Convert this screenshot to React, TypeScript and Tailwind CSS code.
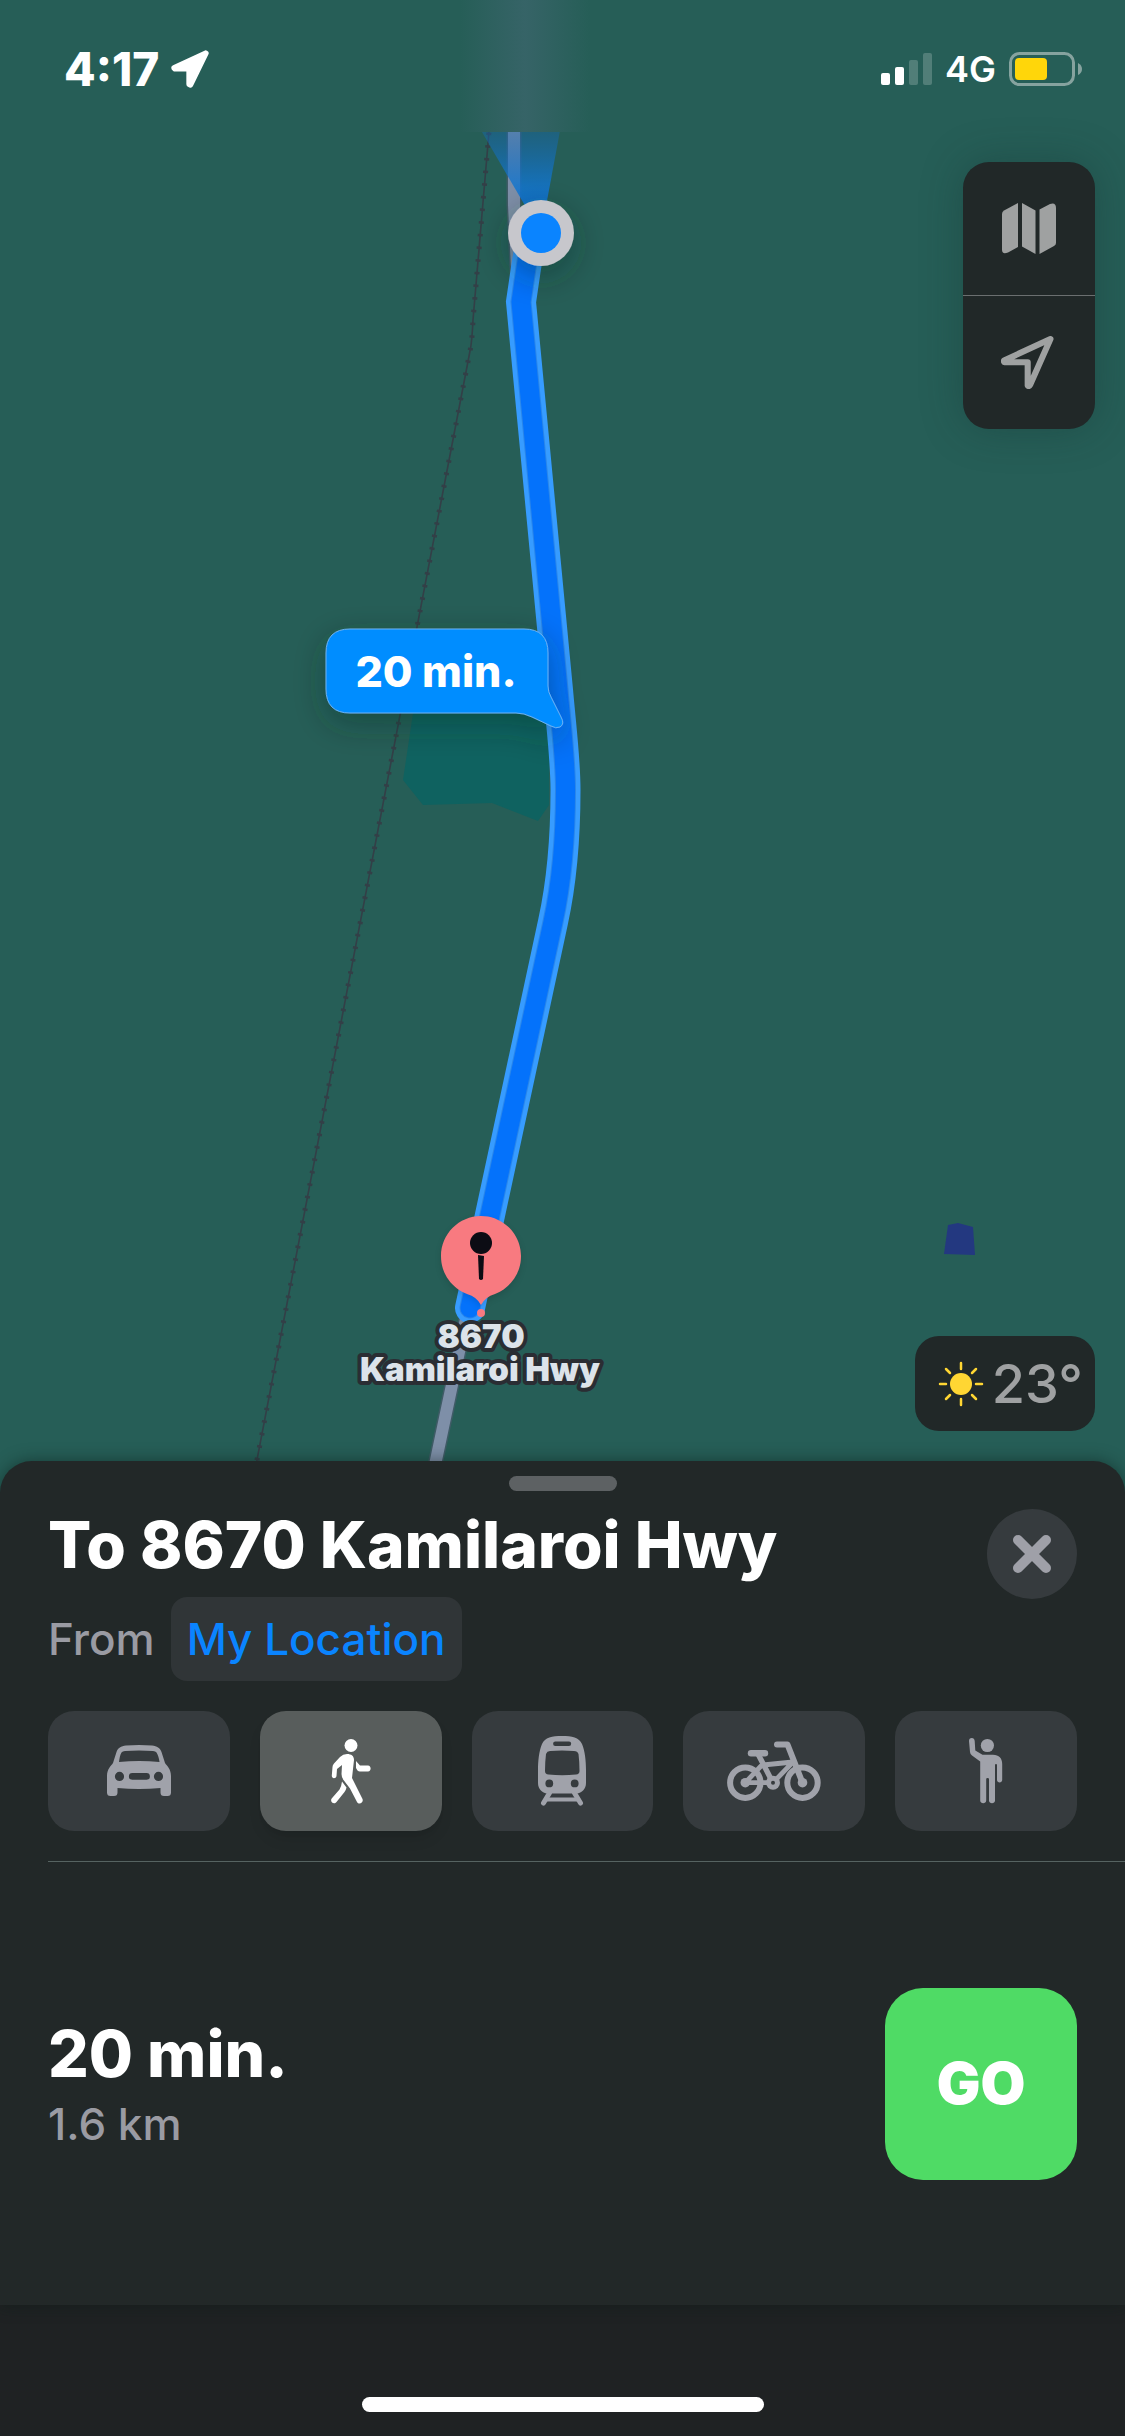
import type { ReactNode } from "react";

type Mode = {
  id: string;
  label: string;
  icon: ReactNode;
};

function CarIcon() {
  return (
    <svg width="64" height="52" viewBox="0 0 64 52" fill="currentColor" aria-hidden="true">
      <path
        fillRule="evenodd"
        d="M19 .5Q32-.5 45 .5C50 1 53 3 54.5 7L58 18C60 21 64 24 64 31V47.500Q64 51 60.500 51H57Q53.500 51 53.500 47.500V43Q32 45 10.500 43V47.500Q10.500 51 7 51H3.500Q0 51 0 47.500V31C0 24 4 21 6 18L9.500 7C11 3 14 1 19 .5ZM12 17Q32 15 52.500 17C52 13 51 10 49.500 7.500Q48.500 6 46 6Q32 5 18 6Q15.500 6 14.500 7.500C13 10 12.500 13 12 17ZM12.500 26.800A4.600 4.600 0 1 0 12.500 36A4.600 4.600 0 1 0 12.500 26.800ZM51.500 26.800A4.600 4.600 0 1 0 51.500 36A4.600 4.600 0 1 0 51.500 26.800ZM25.300 28A3.400 3.400 0 0 0 25.300 34.800H39.500A3.400 3.400 0 0 0 39.500 28Z"
      />
    </svg>
  );
}

function WalkIcon() {
  return (
    <svg width="40" height="65" viewBox="0 0 40 65" fill="currentColor" aria-hidden="true">
      <circle cx="20" cy="6.500" r="6.500" />
      <path d="M16 15C20.500 15 23 17 23 21L21 39L31.500 60C33 63.500 28 66.500 26 63L19 49.500L12.500 41Q10.500 38.500 10.500 35L11 26L6 30L5.500 37C5 40 .5 40 .8 36.500L1.500 28Q1.500 26 3 24.500L9 18Q12 15 16 15Z" />
      <path d="M25 22L29 26.500H37C40.500 26.500 40.500 32.500 37 32.500H29Q27.500 32.500 26.500 31.500L25 29Z" />
      <path d="M11 42.500L15.500 48.500Q15 51 13.500 53L5.500 63C3 66.500-1.500 62.500 .7 59.500L8.500 50.500Q10.500 47 11 42.500Z" />
    </svg>
  );
}

function TrainIcon() {
  return (
    <svg width="48" height="70" viewBox="0 0 48 70" fill="currentColor" aria-hidden="true">
      <path
        fillRule="evenodd"
        d="M24 0C34 0 41 1.500 44 8C47 15 48 25 48 34V47C48 53 44 57 38.500 57.500H9.500C4 57 0 53 0 47V34C0 25 1 15 4 8C7 1.500 14 0 24 0ZM17.300 5.500A2.200 2.200 0 0 0 17.300 9.900H31A2.200 2.200 0 0 0 31 5.500ZM12 15Q24 14 36 15Q39.500 15.200 40.500 18Q41.500 26 41.500 35Q41.500 38.300 38 38.500Q24 40 10.500 38.500Q7 38.300 7 35Q7 26 8 18Q9 15.200 12 15ZM11.300 43.500A3.900 3.900 0 1 0 11.300 51.300A3.900 3.900 0 1 0 11.300 43.500ZM36.700 43.500A3.900 3.900 0 1 0 36.700 51.300A3.900 3.900 0 1 0 36.700 43.500Z"
      />
      <path d="M11.500 57L5.500 67M36.500 57L42.500 67" stroke="currentColor" strokeWidth="5" strokeLinecap="round" />
      <path d="M9 63.500H39" stroke="currentColor" strokeWidth="4" />
    </svg>
  );
}

function BikeIcon() {
  return (
    <svg
      width="94"
      height="60"
      viewBox="0 0 94 60"
      fill="none"
      stroke="currentColor"
      strokeWidth="5.400"
      strokeLinecap="round"
      strokeLinejoin="round"
      aria-hidden="true"
    >
      <circle cx="18.300" cy="41.700" r="15.200" strokeWidth="6" />
      <circle cx="75.500" cy="41.700" r="15.200" strokeWidth="6" />
      <circle cx="18.300" cy="41.700" r="4.800" fill="currentColor" stroke="none" />
      <circle cx="75.500" cy="41.700" r="4.800" fill="currentColor" stroke="none" />
      <path d="M24 12.200H38" strokeWidth="6.400" />
      <path d="M31 13L45.500 41" />
      <path d="M50 3.500H60.500L75.500 41.700" strokeWidth="6" />
      <path d="M36 24L66 21L46 41.700M18.300 41.700H46M18.300 41.700L34 25" strokeWidth="4.800" />
      <circle cx="46" cy="41.700" r="7" fill="currentColor" stroke="none" />
      <circle cx="46" cy="41.700" r="2" fill="#363b3e" stroke="none" />
    </svg>
  );
}

function RideshareIcon() {
  return (
    <svg width="34" height="66" viewBox="0 0 34 66" fill="currentColor" aria-hidden="true">
      <circle cx="18.400" cy="7.500" r="6.600" />
      <path d="M2.800 0C4.500 0 5.500 1 5.700 3L6.300 12.500L13.500 16.800H24C30 16.800 33.200 20.500 33.200 26V42C33.200 45.300 28 45.300 28 42V27Q28 26 27 26T26 27V62.500C26 66 20 66 20 62.500V41Q20 40 18.600 40T17.200 41V62.500C17.200 66 11.200 66 11.200 62.500V23.500L3 17.500Q1.200 16 1 14L0 3C0 1 1 0 2.800 0Z" />
    </svg>
  );
}

function MapIcon() {
  return (
    <svg width="54" height="51" viewBox="0 0 54 51" fill="currentColor" aria-hidden="true">
      <path d="M16 0V44L6 49.500Q0 52 0 46.500V11Q0 8.700 2 7.500Z" />
      <path d="M20 0L33.500 7.500V51L20 43.500Z" />
      <path d="M37.500 6.500L48 1Q54-1 54 5V40Q54 42 52 43L37.500 51Z" />
    </svg>
  );
}

function LocationIcon({ size, filled }: { size: number; filled?: boolean }) {
  return (
    <svg
      width={size}
      height={size}
      viewBox="0 0 52 52"
      fill={filled ? "currentColor" : "none"}
      stroke="currentColor"
      strokeWidth={filled ? 8 : 6}
      strokeLinejoin="round"
      aria-hidden="true"
    >
      {filled ? (
        <path d="M47.500 4.500L4.500 24.500L5.500 25.500H25V47L26.500 47.500Z" />
      ) : (
        <path d="M48.500 3L3 24Q2.500 25.500 4 25.800H26.200V48.500Q27.500 50 28.500 48Z" />
      )}
    </svg>
  );
}

function SunIcon() {
  return (
    <svg width="46" height="46" viewBox="0 0 46 46" aria-hidden="true">
      <circle cx="23" cy="23" r="11" fill="#ffd633" />
      <path
        d="M23 2V8M23 38V44M2 23H8M38 23H44M8 8L12 12M34 34L38 38M8 38L12 34M34 12L38 8"
        stroke="#ffd633"
        strokeWidth="2.500"
        strokeLinecap="round"
      />
    </svg>
  );
}

const modes: Mode[] = [
  { id: "drive", label: "Drive", icon: <CarIcon /> },
  { id: "walk", label: "Walk", icon: <WalkIcon /> },
  { id: "transit", label: "Transit", icon: <TrainIcon /> },
  { id: "cycle", label: "Cycle", icon: <BikeIcon /> },
  { id: "rideshare", label: "Rideshare", icon: <RideshareIcon /> },
];

const ROUTE =
  "M533 225L526 268L521 302L558 690C562 735 565.500 760 565.500 790C565.500 850 560 890 553 922L470 1308";
const RAIL = "M490 120L473 320Q472 342 470 351L256 1465";

function RouteMap() {
  return (
    <svg
      className="absolute inset-0 size-full"
      viewBox="0 0 1125 1461"
      preserveAspectRatio="xMidYMin slice"
      role="img"
      aria-label="Walking route to 8670 Kamilaroi Hwy"
    >
      <defs>
        <linearGradient id="cone" x1="0" y1="1" x2="0" y2="0">
          <stop offset="0" stopColor="#0a70e0" />
          <stop offset=".4" stopColor="#1276d0" stopOpacity=".85" />
          <stop offset="1" stopColor="#1565b0" stopOpacity=".3" />
        </linearGradient>
        <linearGradient id="haze" x1="0" x2="1" y1="0" y2="0">
          <stop offset="0" stopColor="#3a656b" stopOpacity="0" />
          <stop offset=".5" stopColor="#3a656b" stopOpacity=".8" />
          <stop offset="1" stopColor="#3a656b" stopOpacity="0" />
        </linearGradient>
        <filter id="shadow" x="-50%" y="-50%" width="200%" height="250%">
          <feDropShadow dx="0" dy="10" stdDeviation="16" floodColor="#10302c" floodOpacity=".4" />
        </filter>
      </defs>

      <rect width="1125" height="1461" fill="#265e57" />
      <path d="M415 700L403 780L423 805L492 803L538 821L549 805V700Z" fill="#0f6260" />
      <path d="M948 1225L958 1223L973 1227L975 1255L944 1254Z" fill="#233880" />

      {/* railway */}
      <path d={RAIL} fill="none" stroke="#333f47" strokeWidth="1.600" />
      <path d={RAIL} fill="none" stroke="#333f47" strokeWidth="5" strokeDasharray="2.500 10.200" />

      {/* highway */}
      <g fill="none" strokeLinejoin="round">
        <path d="M514 120V205L518 290M470 1300L435 1465" stroke="#3f5b66" strokeWidth="15" />
        <path d="M514 120V205L518 290M470 1300L435 1465" stroke="#7e8fa8" strokeWidth="12" />
      </g>
      <path d="M541 233L475 120H562Z" fill="url(#cone)" />

      {/* route */}
      <g fill="none" strokeLinecap="round">
        <path d={ROUTE} stroke="#379cff" strokeWidth="30" />
        <path d={ROUTE} stroke="#2a86ea" strokeWidth="21" />
        <path d={ROUTE} stroke="#0472fb" strokeWidth="19" />
      </g>

      <g filter="url(#shadow)">
        <circle cx="541" cy="233" r="33" fill="#c7c7cc" />
      </g>
      <circle cx="541" cy="233" r="20" fill="#0a84ff" />

      {/* status bar backdrop */}
      <rect width="1125" height="132" fill="#265e57" />
      <rect x="460" width="130" height="132" fill="url(#haze)" />

      {/* duration callout */}
      <path
        d="M350 629H524Q548 629 548 653V686Q548 692 551 697L561 717Q565 724 560 727Q556 729 551 726L532 717Q524 713 516 713H350Q326 713 326 689V653Q326 629 350 629Z"
        fill="#058dff"
        stroke="#6cb2f2"
        strokeWidth="1"
        filter="url(#shadow)"
      />
      <text x="436" y="687" textAnchor="middle" fill="#fff" fontSize="43" fontWeight="800">
        20 min.
      </text>

      {/* destination pin */}
      <path
        d="M481 1216C503 1216 521 1234 521 1256C521 1274 510 1288 495 1294Q485 1297 481 1305Q477 1297 467 1294C452 1288 441 1274 441 1256C441 1234 459 1216 481 1216Z"
        fill="#f87a80"
        className="drop-shadow-md"
      />
      <circle cx="481" cy="1243" r="11" fill="#0c0c14" />
      <path d="M478 1255L484 1256L483 1279Q481 1281 479 1279Z" fill="#0c0c14" />
      <circle cx="481" cy="1313" r="4" fill="#f87a80" />
      <text
        textAnchor="middle"
        fill="#dce3ea"
        stroke="#2a2d33"
        strokeWidth="8"
        strokeLinejoin="round"
        paintOrder="stroke"
        fontSize="33"
        fontWeight="900"
      >
        <tspan x="481" y="1348">8670</tspan>
        <tspan x="480" y="1381">Kamilaroi Hwy</tspan>
      </text>
    </svg>
  );
}

function StatusBar() {
  return (
    <header className="flex h-[132px] items-start justify-between pt-12 pr-[43px] pl-16 text-white">
      <div className="flex h-[42px] items-center gap-3">
        <span className="text-[46px] leading-none font-extrabold">4:17</span>
        <LocationIcon size={38} filled />
      </div>
      <div className="flex h-[42px] items-center gap-[13px]">
        <div className="flex items-end gap-[5px]">
          <span className="h-3 w-[9px] rounded-xs bg-white" />
          <span className="h-[18px] w-[9px] rounded-xs bg-white" />
          <span className="h-[25px] w-[9px] rounded-xs bg-white/20" />
          <span className="h-8 w-[9px] rounded-xs bg-white/20" />
        </div>
        <span className="text-[36px] leading-none font-semibold">4G</span>
        <svg width="73" height="34" viewBox="0 0 73 34" aria-label="Battery">
          <rect x="1.500" y="1.500" width="63" height="31" rx="9" fill="none" stroke="#86a39f" strokeWidth="3" />
          <rect x="6" y="6" width="32" height="22" rx="4" fill="#ffd60a" />
          <path d="M69 11Q73 13 73 17T69 23Z" fill="#86a39f" />
        </svg>
      </div>
    </header>
  );
}

export default function App() {
  const active = "walk";

  return (
    <div className="flex min-h-screen flex-col bg-[#265e57] font-['Inter','Liberation_Sans',sans-serif]">
      <section className="relative flex flex-1 flex-col">
        <RouteMap />
        <div className="relative flex flex-1 flex-col">
          <StatusBar />
          <div className="flex flex-1 flex-col items-end justify-between px-[30px] py-[30px]">
            <div className="flex w-[132px] flex-col overflow-hidden rounded-[26px] bg-[#212828] text-[#9fa1a1] shadow-[0_0_40px_rgba(20,50,45,0.35)]">
              <button aria-label="Map type" className="flex h-[133px] items-center justify-center">
                <MapIcon />
              </button>
              <button
                aria-label="Track my location"
                className="flex h-[134px] items-center justify-center border-t border-[#6b6f70] pr-1"
              >
                <LocationIcon size={53} />
              </button>
            </div>
            <div className="flex h-[95px] w-[180px] items-center justify-end gap-2 rounded-3xl bg-[#212828] pr-3 text-[#9fa1a2]">
              <SunIcon />
              <span className="text-[54px] leading-none font-medium">23°</span>
            </div>
          </div>
        </div>
      </section>

      <main className="relative flex flex-col rounded-t-[32px] bg-[#222828] pt-[15px] shadow-[0_0_16px_rgba(10,25,22,0.5)]">
        <div className="h-[15px] w-[108px] self-center rounded-full bg-[#5d6163]" />

        <div className="mt-[18px] flex items-start justify-between px-12">
          <div>
            <h1 className="text-[64px] leading-[72px] font-extrabold text-white">To 8670 Kamilaroi Hwy</h1>
            <div className="mt-4 flex items-center gap-4 text-[44px] font-medium text-[#9a9ba3]">
              <span>From</span>
              <button className="h-[84px] rounded-2xl bg-[#303537] px-4 text-[#0a84ff]">My Location</button>
            </div>
          </div>
          <button
            aria-label="Close"
            className="flex size-[90px] items-center justify-center rounded-full bg-[#363b3e] text-[#9fa0a8]"
          >
            <svg width="40" height="40" viewBox="0 0 40 40" aria-hidden="true">
              <path d="M6 6L34 34M34 6L6 34" stroke="currentColor" strokeWidth="10" strokeLinecap="round" />
            </svg>
          </button>
        </div>

        <nav className="mt-[30px] grid grid-cols-5 gap-[30px] px-12">
          {modes.map((mode) => (
            <button
              key={mode.id}
              aria-label={mode.label}
              aria-pressed={mode.id === active}
              className={
                mode.id === active
                  ? "flex h-[120px] items-center justify-center rounded-[26px] bg-[#585d5c] text-white shadow-lg"
                  : "flex h-[120px] items-center justify-center rounded-[26px] bg-[#363b3e] text-[#a0a2aa]"
              }
            >
              {mode.icon}
            </button>
          ))}
        </nav>

        <div className="mt-[30px] ml-12 flex h-[444px] items-center justify-between border-t border-[#566361] pr-12">
          <div>
            <p className="text-[64px] leading-[80px] font-extrabold text-white">20 min.</p>
            <p className="text-[44px] leading-[60px] font-medium text-[#9a9ba3]">1.6 km</p>
          </div>
          <button className="size-[192px] rounded-[38px] bg-[#4fdb65] text-[58px] font-black text-white">GO</button>
        </div>
      </main>

      <footer className="flex h-[131px] flex-col items-center justify-end bg-[#1f2223] pb-6">
        <div className="h-[15px] w-[402px] rounded-full bg-white" />
      </footer>
    </div>
  );
}
